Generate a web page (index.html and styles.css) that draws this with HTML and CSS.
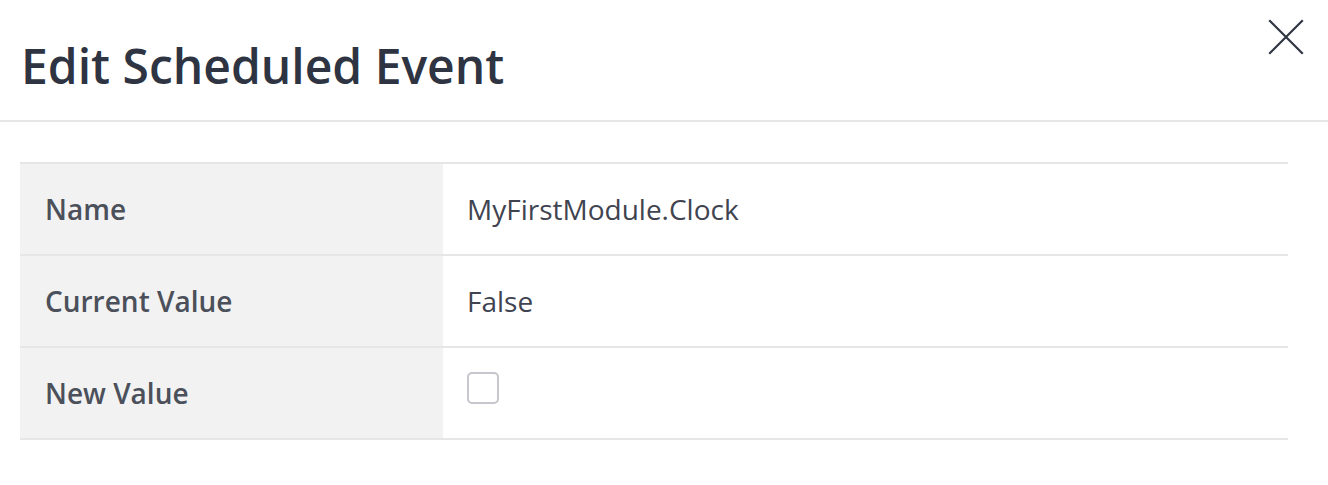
FILE: index.html
```html
<!DOCTYPE html>
<html>
<head>
<meta charset="utf-8">
<link rel="stylesheet" href="styles.css">
</head>
<body>
<div class="modal">
  <div class="modal-header">
    <h1 class="title">Edit Scheduled Event</h1>
    <button class="close" aria-label="Close">
      <svg width="36" height="36" viewBox="0 0 36 36"><path d="M2 2 L34 34 M34 2 L2 34" stroke="#2f3542" stroke-width="2.2" fill="none" stroke-linecap="square"/></svg>
    </button>
  </div>
  <div class="modal-body">
    <table class="props">
      <tr><th>Name</th><td>MyFirstModule.Clock</td></tr>
      <tr><th>Current Value</th><td>False</td></tr>
      <tr><th>New Value</th><td><span class="checkbox"></span></td></tr>
    </table>
  </div>
</div>
</body>
</html>
```
FILE: styles.css
```css
* { box-sizing: border-box; }
html, body { margin: 0; padding: 0; background: #fff; }
body { font-family: "Open Sans", "Liberation Sans", sans-serif; color: #2f3542; }
.modal-header {
  display: flex;
  justify-content: space-between;
  align-items: flex-start;
  border-bottom: 2px solid #e6e6e6;
  height: 122px;
  padding: 0 24px 0 21px;
}
.title {
  margin: 0;
  padding-top: 34px;
  font-size: 48px;
  line-height: 64px;
  font-weight: 600;
  color: #2e3442;
  letter-spacing: 0;
}
.close {
  background: none;
  border: 0;
  padding: 0;
  margin-top: 19px;
  width: 36px;
  height: 36px;
  cursor: pointer;
}
.close svg { display: block; }
.modal-body { padding: 40px 40px 0 20px; }
.props {
  width: 100%;
  border-collapse: collapse;
  border-top: 2px solid #e6e6e6;
}
.props tr { border-bottom: 2px solid #e6e6e6; }
.props th, .props td {
  height: 92px;
  padding: 0 24px;
  text-align: left;
  vertical-align: middle;
  font-size: 28px;
}
.props th {
  width: 423px;
  background: #f2f2f2;
  font-weight: 600;
  color: #4b505a;
  padding-left: 25px;
}
.props td {
  font-weight: 400;
  color: #3f4450;
}
.checkbox {
  display: block;
  width: 32px;
  height: 32px;
  border: 2px solid #c6c6cc;
  border-radius: 5px;
  background: #fff;
  margin: 0 0 11px 0;
}
```
